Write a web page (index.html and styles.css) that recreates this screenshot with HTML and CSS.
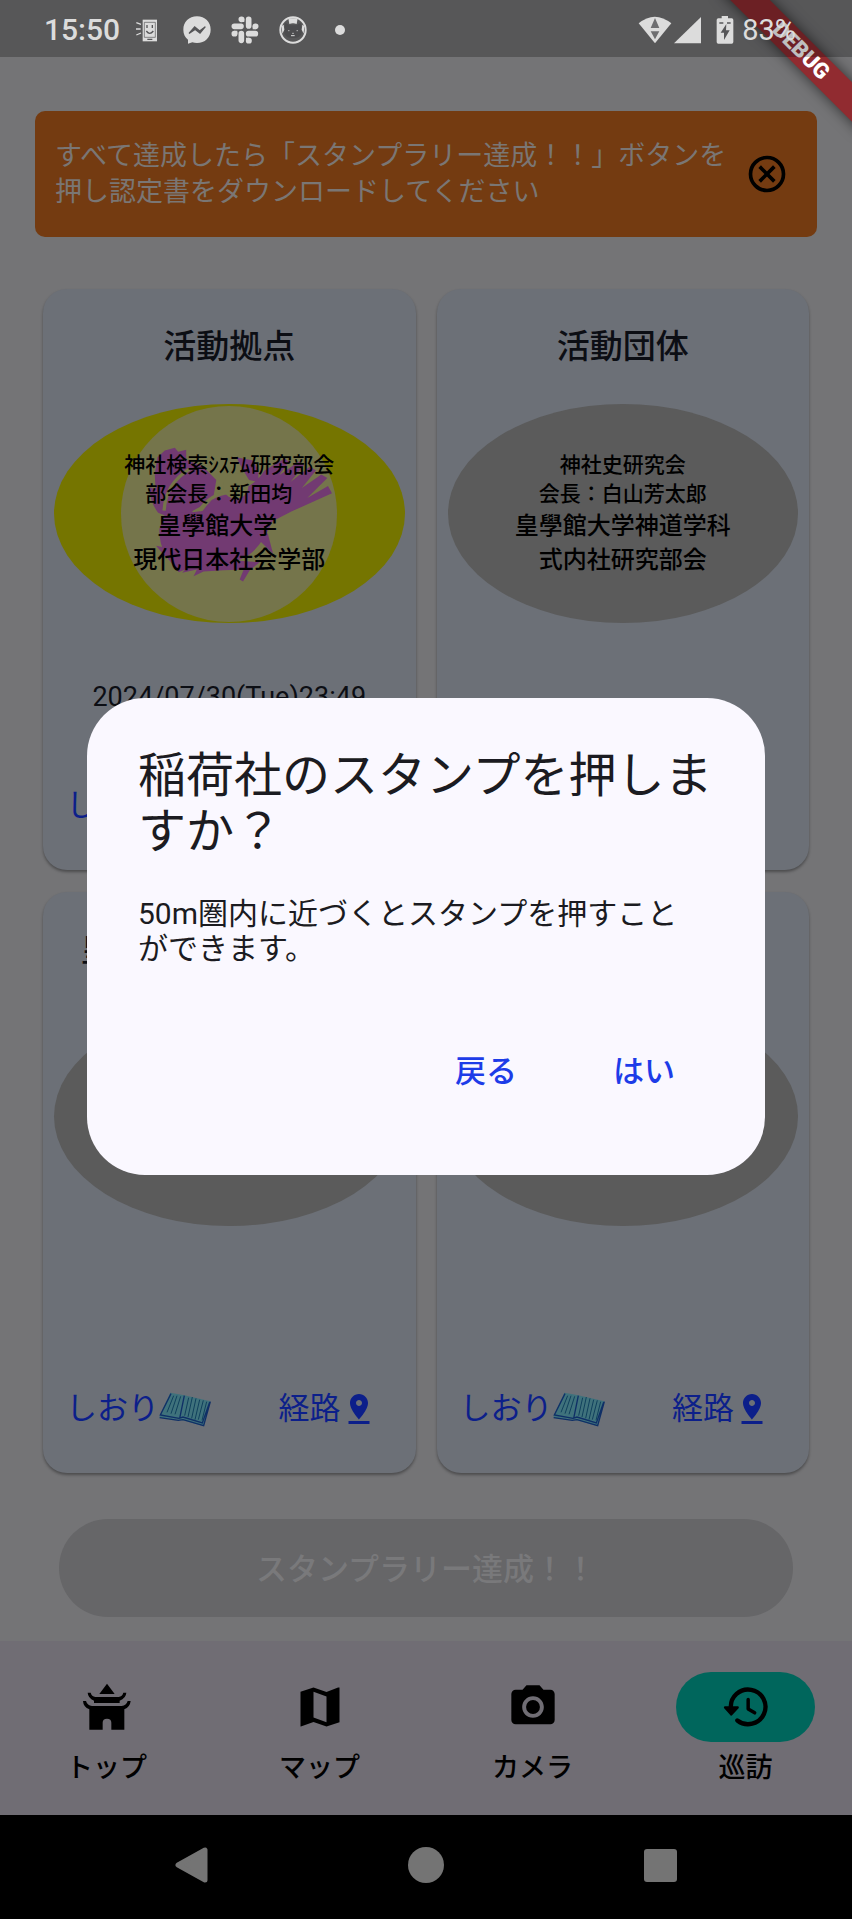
FILE: index.html
```
<!DOCTYPE html>
<html lang="ja">
<head>
    <meta charset="UTF-8">
    <meta name="viewport" content="width=device-width, initial-scale=1.0">
    <title>巡訪</title>
    <link rel="stylesheet" href="styles.css">
</head>
<body>
    <!-- shared icons -->
    <svg class="sprite" aria-hidden="true">
        <symbol id="book" viewBox="388 92 156 108">
            <path d="M390 166L422 97l42 8 78 18-20 74-62-17-70-8z" fill="#3f727c"/>
            <path d="M424 100L392 164l56 10 12-4 58 18 22-62M390 172l56 8 14-2 62 18 20-72M464 106l-14 68" fill="none" stroke="#0f2f66" stroke-width="4"/>
            <path d="M432 106l-20 50M442 106l-18 54M453 108l-17 54M477 112l-12 54M488 110l-13 60M499 114l-13 60M510 118l-14 60M521 120l-15 58M531 124l-14 56" fill="none" stroke="#10405c" stroke-width="3"/>
        </symbol>
        <symbol id="pin" viewBox="0 0 24 24">
            <path d="M18 8c0-3.31-2.69-6-6-6S6 4.69 6 8c0 4.5 6 11 6 11s6-6.5 6-11zm-8 0c0-1.1.9-2 2-2s2 .9 2 2-.89 2-2 2c-1.1 0-2-.9-2-2zM5 20v2h14v-2H5z"/>
        </symbol>
    </svg>

    <header class="status-bar">
        <span class="time">15:50</span>
        <div class="notifications">
            <svg width="28" height="28" viewBox="0 0 84 84">
                <path d="M23 11h43v65H23z"/>
                <path d="M28 19h33v45H28z" fill="none" stroke="#565658" stroke-width="2"/>
                <path d="M36 27v9M52 27v9M34 45q10 14 21 0M37 70h15" fill="none" stroke="#565658" stroke-width="4"/>
                <path d="M4 20l14 5M3 39h14M4 57l14-6" fill="none" stroke="#dcdcdc" stroke-width="4"/>
            </svg>
            <svg width="28" height="28" viewBox="0 0 84 84">
                <path d="M42 1C18 1 1 18 1 41c0 13 5 23 14 30v12l13-4c4 1 9 2 14 2 24 0 41-17 41-40S66 1 42 1z"/>
                <path d="M18 52l17-19 15 12 17-13-16 19-15-11z" fill="#565658" stroke="#565658" stroke-width="4"/>
            </svg>
            <svg width="28" height="28" viewBox="0 0 84 84">
                <g fill="none" stroke="#dcdcdc" stroke-width="17" stroke-linecap="round">
                    <path d="M53 10v20M10 31h20M31 53v20M53 53h20"/>
                    <path d="M31 10h1M74 31h-1M10 53h1M53 74h1"/>
                </g>
                <path d="M31 10h9v8h-9zM65 31h9v9h-9zM10 44h9v9h-9zM45 65h9v9h-9z"/>
            </svg>
            <svg width="28" height="28" viewBox="0 0 84 84">
                <circle cx="42" cy="42" r="38" fill="none" stroke="#dcdcdc" stroke-width="6"/>
                <path d="M19 20l12 8h22l12-8 2 20c4 12 0 26-25 26S13 52 17 40z" fill="#4c4c4e"/>
                <path d="M28 7h28l-3 17q-11-4-22 0zM8 30l6-4 2 15-6 12zM76 30l-6-4-2 15 6 12z"/>
                <path d="M28 44h3M53 44h3M40 52h4M36 59h11" stroke="#dcdcdc" stroke-width="3"/>
            </svg>
            <span class="dot"></span>
        </div>
        <div class="system-icons">
            <svg width="34" height="28" viewBox="0 0 102 84">
                <path d="M2 22Q50-18 100 22L51 82z"/>
                <path d="M51 6l13 30H38zM38 46h26L51 70z" fill="#6e6e70"/>
            </svg>
            <svg width="27" height="28" viewBox="0 0 81 84"><path d="M81 3v79H0z"/></svg>
            <svg class="battery" width="18" height="28" viewBox="0 0 54 84">
                <path d="M17 0h19v7h11q5 0 5 5v66q0 5-5 5H7q-5 0-5-5V12q0-5 5-5h10z"/>
                <path d="M31 24L14 50h10v22l17-29H30z" fill="#565658"/>
                <path d="M10 21h12M33 21h11" stroke="#565658" stroke-width="4"/>
            </svg>
            <span>83%</span>
        </div>
    </header>

    <div class="debug-corner"><span class="debug-banner">DEBUG</span></div>

    <main class="content">
        <div class="notice">
            <p>すべて達成したら「スタンプラリー達成！！」ボタンを<br>押し認定書をダウンロードしてください</p>
            <button class="close-button" aria-label="閉じる">
                <svg width="44" height="44" viewBox="0 0 24 24" fill="none" stroke="#000" stroke-width="2">
                    <circle cx="12" cy="12" r="9"/>
                    <path d="M8 8l8 8M16 8l-8 8"/>
                </svg>
            </button>
        </div>

        <div class="card-grid">
            <section class="card">
                <h2>活動拠点</h2>
                <div class="stamp stamped">
                    <svg class="bird" viewBox="275 377 646 646">
                        <circle cx="598" cy="700" r="323" fill="#75754b"/>
                        <g fill="#723a72">
                            <path d="M384 530l22-20 30-8 10 12 24-6v30l50 20 40 40-10 60-60 32-50 80-20-50-40-60-4-80z"/>
                            <path d="M360 620l34 10 16 76-24-10q-24-30-26-76z"/>
                            <path d="M410 690q60 10 110 0 40-60 110-60 50-20 74-60l60-36 14 10-30 40 60-42 14 12-40 50 58-46 18 12-42 52 58-40 18 10-60 60 62-36 12 22-120 54-58 30q-30 70-70 100-60 40-160 30l-50 22-40-50q-20-40-18-80z"/>
                            <path d="M620 530l50 10 16 30v34l-28-6q-20-30-38-68zM680 750l34 8 16 62-40-40zM480 850l60-6 90-4 60 4-30 24-20 34-10-6 12-30-60 2-60 4-30 14 10-20-44 10z"/>
                            <path d="M380 795l70 14-20 10 30 10-50 2z"/>
                        </g>
                        <circle cx="618" cy="616" r="38" fill="#75754b"/>
                        <path d="M404 690q4-80 76-124M510 690q30-50 90-54" fill="none" stroke="#75754b" stroke-width="10"/>
                    </svg>
                    <div class="stamp-text">
                        <p>神社検索ｼｽﾃﾑ研究部会</p>
                        <p>部会長：新田均&nbsp;&nbsp;&nbsp;&nbsp;</p>
                        <p class="large">皇學館大学&nbsp;&nbsp;&nbsp;&nbsp;</p>
                        <p class="large">現代日本社会学部</p>
                    </div>
                </div>
                <time class="date">2024/07/30(Tue)23:49</time>
                <div class="links">
                    <a href="#">しおり<svg width="52" height="36"><use href="#book"/></svg></a>
                    <a href="#">経路<svg width="36" height="36"><use href="#pin"/></svg></a>
                </div>
            </section>

            <section class="card">
                <h2>活動団体</h2>
                <div class="stamp">
                    <div class="stamp-text">
                        <p>神社史研究会</p>
                        <p>会長：白山芳太郎</p>
                        <p class="large">皇學館大学神道学科</p>
                        <p class="large">式内社研究部会</p>
                    </div>
                </div>
                <div class="date"></div>
                <div class="links">
                    <a href="#">しおり<svg width="52" height="36"><use href="#book"/></svg></a>
                    <a href="#">経路<svg width="36" height="36"><use href="#pin"/></svg></a>
                </div>
            </section>

            <section class="card">
                <h2>皇學館大学神道学科</h2>
                <div class="stamp"></div>
                <div class="date"></div>
                <div class="links">
                    <a href="#">しおり<svg width="52" height="36"><use href="#book"/></svg></a>
                    <a href="#">経路<svg width="36" height="36"><use href="#pin"/></svg></a>
                </div>
            </section>

            <section class="card">
                <h2>稲荷社</h2>
                <div class="stamp"></div>
                <div class="date"></div>
                <div class="links">
                    <a href="#">しおり<svg width="52" height="36"><use href="#book"/></svg></a>
                    <a href="#">経路<svg width="36" height="36"><use href="#pin"/></svg></a>
                </div>
            </section>
        </div>

        <button class="complete-button" disabled>スタンプラリー達成！！</button>
    </main>

    <nav class="bottom-nav">
        <a href="#">
            <span class="nav-icon">
                <svg width="52" height="52" viewBox="242 150 156 156">
                    <path d="M320 158l23 31h-46z"/>
                    <path d="M262 185h9q3 11 14 13h70q11-2 14-13h9q-1 16-20 24v7h-77v-7q-18-8-19-24z"/>
                    <path d="M248 210h9q4 13 18 15h89q14-2 18-15h9q-2 18-19 25v61h-39v-21q0-12-13-12t-13 12v21h-40v-61q-18-7-19-25z"/>
                </svg>
            </span>
            トップ
        </a>
        <a href="#">
            <span class="nav-icon">
                <svg width="52" height="52" viewBox="0 0 24 24">
                    <path d="M20.5 3l-.16.03L15 5.1 9 3 3.36 4.9 3 5v16l.16-.03L9 18.9l6 2.1 6-2V3zM15 19l-6-2.11V5l6 2.11V19z"/>
                </svg>
            </span>
            マップ
        </a>
        <a href="#">
            <span class="nav-icon">
                <svg width="52" height="52" viewBox="0 0 24 24">
                    <circle cx="12" cy="12" r="3.2"/>
                    <path d="M9 2L7.17 4H4c-1.1 0-2 .9-2 2v12c0 1.1.9 2 2 2h16c1.1 0 2-.9 2-2V6c0-1.1-.9-2-2-2h-3.17L15 2H9zm3 15c-2.76 0-5-2.24-5-5s2.24-5 5-5 5 2.24 5 5-2.24 5-5 5z"/>
                </svg>
            </span>
            カメラ
        </a>
        <a href="#" aria-current="page">
            <span class="nav-icon active">
                <svg width="52" height="52" viewBox="0 0 24 24">
                    <path d="M5 12.5a8 8 0 1 1 3 5.7" fill="none" stroke="#000" stroke-width="2" stroke-linecap="round"/>
                    <path d="M13 8.5v4.4l3 1.8" fill="none" stroke="#000" stroke-width="1.6" stroke-linecap="round" stroke-linejoin="round"/>
                    <path d="M2.3 12.2h5.9l-3 3.3z" stroke="#000" stroke-linejoin="round"/>
                </svg>
            </span>
            巡訪
        </a>
    </nav>

    <footer class="system-nav">
        <button aria-label="戻る"><svg width="36" height="36" viewBox="0 0 36 36"><path d="M4 18L31 3v30z" stroke="#747474" stroke-width="5" stroke-linejoin="round"/></svg></button>
        <button aria-label="ホーム"><svg width="36" height="36" viewBox="0 0 36 36"><circle cx="18" cy="18" r="18"/></svg></button>
        <button aria-label="アプリ履歴"><svg width="36" height="36" viewBox="0 0 36 36"><rect x="2" y="2" width="33" height="33" rx="3"/></svg></button>
    </footer>

    <div class="overlay">
        <div class="dialog" role="dialog" aria-labelledby="dialog-title">
            <h1 id="dialog-title">稲荷社のスタンプを押しますか？</h1>
            <p>50m圏内に近づくとスタンプを押すこと<br>ができます。</p>
            <div class="dialog-actions">
                <button>戻る</button>
                <button>はい</button>
            </div>
        </div>
    </div>
</body>
</html>
```
FILE: styles.css
```
* {
    box-sizing: border-box;
}

body {
    position: relative;
    display: flex;
    flex-direction: column;
    min-height: 100vh;
    margin: 0;
    background-color: #747476;
    color: #000;
    font-family: Roboto, "Noto Sans CJK JP", sans-serif;
    overflow-x: hidden;
}

h1, h2, p {
    margin: 0;
}

button {
    padding: 0;
    border: none;
    background: none;
    font-family: inherit;
    cursor: pointer;
}

a {
    text-decoration: none;
}

svg {
    display: block;
}

.sprite {
    position: absolute;
    width: 0;
    height: 0;
}

/* status bar */
.status-bar {
    position: relative;
    z-index: 3;
    display: flex;
    align-items: center;
    height: 57px;
    padding: 2px 56px 0 44px;
    background-color: rgba(0, 0, 0, 0.25);
    color: #dcdcdc;
    fill: #dcdcdc;
}

.time {
    font-size: 30px;
    font-weight: 500;
}

.notifications {
    display: flex;
    align-items: center;
    gap: 20px;
    margin-left: 15px;
}

.dot {
    width: 10px;
    height: 10px;
    margin-left: 8px;
    border-radius: 50%;
    background-color: #dcdcdc;
}

.system-icons {
    display: flex;
    align-items: center;
    gap: 2px;
    margin-left: auto;
    font-size: 29px;
}

.battery {
    margin: 0 6px 0 13px;
}

.debug-corner {
    position: absolute;
    top: 0;
    right: 0;
    z-index: 2;
    width: 160px;
    height: 160px;
    overflow: hidden;
}

.debug-banner {
    position: absolute;
    top: 37px;
    left: 9px;
    width: 200px;
    background-color: #912b30;
    box-shadow: 0 0 14px rgba(0, 0, 0, 0.6);
    color: #fff;
    font-size: 22px;
    font-weight: 900;
    line-height: 28px;
    text-align: center;
    transform: rotate(45deg);
}

/* page */
.content {
    flex: 1;
    display: flex;
    flex-direction: column;
    padding: 54px 35px 24px;
}

.notice {
    display: flex;
    align-items: center;
    justify-content: space-between;
    min-height: 126px;
    padding: 0 28px 0 20px;
    border-radius: 10px;
    background-color: #743b11;
    color: #7a7674;
    font-size: 27px;
    line-height: 36px;
}

.notice p {
    white-space: nowrap;
}

.card-grid {
    display: grid;
    grid-template-columns: 1fr 1fr;
    gap: 22px 21px;
    margin: 52px 8px 0;
}

.card {
    display: flex;
    flex-direction: column;
    padding: 34px 0 46px;
    border-radius: 24px;
    background-color: #6c7077;
    box-shadow: 0 2px 3px rgba(0, 0, 0, 0.35);
}

.card h2 {
    color: #0c0e14;
    font-size: 33px;
    font-weight: 500;
    line-height: 48px;
    text-align: center;
}

.stamp {
    display: grid;
    place-items: center;
    height: 219px;
    margin: 33px 11px 0;
    border-radius: 50%;
    background-color: #5b5b5b;
}

.stamped {
    background-color: #757500;
}

.bird,
.stamp-text {
    grid-area: 1 / 1;
}

.bird {
    width: 216px;
    height: 216px;
}

.stamp-text {
    font-size: 21px;
    font-weight: 500;
    line-height: 29px;
    text-align: center;
}

.stamp-text .large {
    font-size: 24px;
    line-height: 34px;
}

.date {
    height: 36px;
    margin-top: 56px;
    color: #0c0e14;
    font-size: 27px;
    line-height: 36px;
    text-align: center;
}

.links {
    display: flex;
    justify-content: space-between;
    margin-top: 73px;
    padding: 0 39px 0 23px;
}

.links a {
    display: flex;
    align-items: center;
    color: #0c1f8a;
    fill: #0c1f8a;
    font-size: 31px;
    line-height: 36px;
}

.complete-button {
    height: 98px;
    margin: 46px 24px 0;
    padding-bottom: 4px;
    border-radius: 49px;
    background-color: #666668;
    color: #79797b;
    font-size: 31px;
    font-weight: 500;
}

/* navigation */
.bottom-nav {
    display: flex;
    height: 174px;
    padding-top: 31px;
    background-color: #706d74;
}

.bottom-nav a {
    flex: 1;
    display: flex;
    flex-direction: column;
    align-items: center;
    gap: 8px;
    color: #000;
    font-size: 27px;
    font-weight: 500;
    line-height: 36px;
}

.nav-icon {
    display: flex;
    align-items: center;
    justify-content: center;
    width: 139px;
    height: 70px;
    border-radius: 35px;
}

.nav-icon.active {
    background-color: #00665c;
}

.system-nav {
    display: flex;
    align-items: center;
    justify-content: center;
    gap: 198px;
    height: 104px;
    padding-bottom: 4px;
    background-color: #000;
    fill: #747474;
}

/* dialog */
.overlay {
    position: absolute;
    top: 57px;
    right: 0;
    bottom: 104px;
    left: 0;
    z-index: 1;
    display: flex;
    align-items: center;
    justify-content: center;
    padding: 0 87px;
}

.dialog {
    width: 100%;
    padding: 50px 51px 56px;
    border-radius: 58px;
    background-color: #faf8ff;
    color: #1b1b21;
}

.dialog h1 {
    font-size: 48px;
    font-weight: 400;
    line-height: 56px;
}

.dialog p {
    margin-top: 36px;
    font-size: 30px;
    line-height: 35px;
}

.dialog-actions {
    display: flex;
    justify-content: flex-end;
    gap: 46px;
    margin-top: 53px;
    padding-right: 14px;
}

.dialog-actions button {
    height: 100px;
    padding: 0 25px;
    color: #1d3ce8;
    font-size: 31px;
    font-weight: 500;
}
```
